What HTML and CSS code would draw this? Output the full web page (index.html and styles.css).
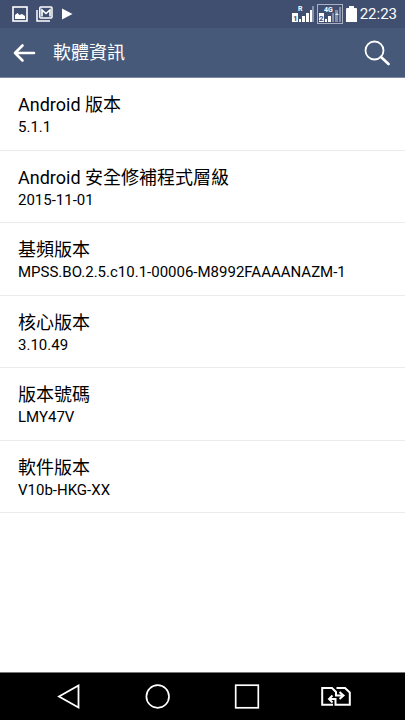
FILE: index.html
```html
<!DOCTYPE html>
<html lang="zh-Hant">
<head>
<meta charset="utf-8">
<meta name="viewport" content="width=device-width, initial-scale=1">
<title>軟體資訊</title>
<link rel="stylesheet" href="styles.css">
</head>
<body>
<div class="status">
  <div class="status-left">
    <svg width="16" height="16" viewBox="0 0 16 16" aria-hidden="true"><rect x="1" y="1" width="14" height="14" fill="none" stroke="#fff" stroke-width="1.6"/><path d="M3 13V9l2.500-2 2 2 2.500-1 3 2v3z" fill="#fff"/></svg>
    <svg width="17" height="16" viewBox="0 0 17 16" aria-hidden="true"><path d="M1 4v11h13" fill="none" stroke="#fff" stroke-width="1.500"/><rect x="3.800" y="1" width="12.200" height="11" rx="1" fill="none" stroke="#fff" stroke-width="1.500"/><path d="M6 10.500V4l4 3.500L14 4v6.500" fill="none" stroke="#fff" stroke-width="1.600"/></svg>
    <svg width="12" height="16" viewBox="0 0 12 16" aria-hidden="true"><path d="M1 2.500L11.500 8 1 13.500z" fill="#fff"/></svg>
  </div>
  <div class="status-right">
    <div class="signals">
      <svg width="23" height="20" viewBox="0 0 23 20" aria-hidden="true">
        <text class="net" x="6" y="7">R</text>
        <path d="M0 9h6v9H0z" fill="#fff"/><text class="sim" x="1" y="17">1</text>
        <path d="M7 15h2v3H7zM10 12h3v6h-3zM14 9h3v9h-3zM18 6h2v12h-2z" fill="#fff"/><path d="M20 2h2v16h-2z" fill="#8792aa"/>
      </svg>
      <svg width="26" height="20" viewBox="0 0 26 20" aria-hidden="true">
        <rect x=".5" y=".5" width="25" height="19" fill="none" stroke="#a8b0c1"/>
        <text class="net" x="7" y="8">4G</text>
        <path d="M2 9h5v9H2z" fill="#fff"/><text class="sim" x="2" y="17">2</text>
        <path d="M8 15h2v3H8zM11 12h3v6h-3z" fill="#fff"/><path d="M15 9h2v9h-2zM18 6h3v12h-3zM22 3h2v15h-2z" fill="#8792aa"/><path d="M18 11l2-2 2 2z" fill="#e1e5ec"/>
      </svg>
    </div>
    <svg width="11" height="16" viewBox="0 0 11 16" aria-hidden="true"><path d="M3 0h5v2h2q1 0 1 1v13H0V3q0-1 1-1h2z" fill="#fff"/></svg>
    <time>22:23</time>
  </div>
</div>
<header class="bar">
  <button class="icon-btn" type="button" aria-label="返回"><svg width="24" height="22" viewBox="0 0 24 22"><path d="M22 11H3M10.500 3.500L3 11l7.500 7.500" fill="none" stroke="#fff" stroke-width="2.600" stroke-linecap="round" stroke-linejoin="round"/></svg></button>
  <h1>軟體資訊</h1>
  <button class="icon-btn" type="button" aria-label="搜尋"><svg width="26" height="26" viewBox="0 0 26 26"><circle cx="10.500" cy="10.500" r="9" fill="none" stroke="#fff" stroke-width="1.800"/><path d="M17 17l7.500 7" stroke="#fff" stroke-width="2.600" stroke-linecap="round"/></svg></button>
</header>
<main>
  <dl class="list">
    <div class="row"><dt>Android 版本</dt><dd>5.1.1</dd></div>
    <div class="row"><dt>Android 安全修補程式層級</dt><dd>2015-11-01</dd></div>
    <div class="row"><dt>基頻版本</dt><dd>MPSS.BO.2.5.c10.1-00006-M8992FAAAANAZM-1</dd></div>
    <div class="row"><dt>核心版本</dt><dd>3.10.49</dd></div>
    <div class="row"><dt>版本號碼</dt><dd>LMY47V</dd></div>
    <div class="row"><dt>軟件版本</dt><dd>V10b-HKG-XX</dd></div>
  </dl>
</main>
<nav class="nav">
  <button class="icon-btn" type="button" aria-label="上一頁"><svg width="30" height="26" viewBox="0 0 30 26"><path d="M24.500 1.500v22L5 12.500z" fill="none" stroke="#fff" stroke-width="1.800"/></svg></button>
  <button class="icon-btn" type="button" aria-label="主畫面"><svg width="30" height="26" viewBox="0 0 30 26"><circle cx="14.700" cy="12.500" r="11.300" fill="none" stroke="#fff" stroke-width="1.700"/></svg></button>
  <button class="icon-btn" type="button" aria-label="最近使用"><svg width="30" height="26" viewBox="0 0 30 26"><rect x="3.700" y="1.200" width="22.600" height="22.600" fill="none" stroke="#fff" stroke-width="1.700"/></svg></button>
  <button class="icon-btn" type="button" aria-label="切換 SIM 卡"><svg width="30" height="26" viewBox="0 0 30 26"><path d="M12 20.800H1.200V4H11l4 4v3.500h7M15.500 4H24l4.800 4.500v12.300H14.500V15H8M18.500 8l4 3.500-4 3.500M11.500 11.500L8 15l3.500 3.500" fill="none" stroke="#fff" stroke-width="2"/></svg></button>
</nav>
</body>
</html>
```
FILE: styles.css
```css
* {
  box-sizing: border-box;
}

body {
  display: flex;
  flex-direction: column;
  min-height: 100vh;
  margin: 0;
  background: #fff;
  color: #000;
  font-family: Roboto, "Noto Sans CJK TC", sans-serif;
}

svg {
  display: block;
}

.status {
  display: flex;
  align-items: center;
  justify-content: space-between;
  height: 28px;
  padding: 0 8px 0 12px;
  background: #404f70;
  color: #fff;
}

.status-left {
  display: flex;
  align-items: center;
  gap: 8px;
}

.status-right {
  display: flex;
  align-items: center;
  gap: 3px;
}

.signals {
  display: flex;
  gap: 2px;
}

.status time {
  font-size: 15px;
  line-height: 20px;
}

.net {
  fill: #fff;
  font-size: 7px;
  font-weight: 700;
}

.sim {
  fill: #404f70;
  font-size: 8px;
  font-weight: 700;
}

.bar {
  display: flex;
  align-items: center;
  height: 50px;
  padding: 0 15px 0 12px;
  border-bottom: 1px solid #7d89a1;
  background: #465979;
  color: #fff;
}

.bar h1 {
  flex: 1;
  margin: 0 0 0 17px;
  font-size: 18px;
  font-weight: 400;
  line-height: 26px;
}

.icon-btn {
  padding: 0;
  border: 0;
  background: none;
}

main {
  display: flex;
  flex: 1;
  padding-bottom: 159px;
}

.list {
  display: grid;
  flex: 1;
  grid-auto-rows: 1fr;
  margin: 0;
}

.row {
  padding: 14px 18px 11px;
  border-bottom: 1px solid #ebebeb;
}

.row dt {
  font-size: 18px;
  line-height: 26px;
}

.row dd {
  margin: 0;
  font-size: 15px;
  line-height: 18px;
}

.nav {
  display: flex;
  align-items: center;
  justify-content: space-between;
  height: 48px;
  padding: 0 54px;
  border-top: 1px solid #777;
  background: #000;
}
```
